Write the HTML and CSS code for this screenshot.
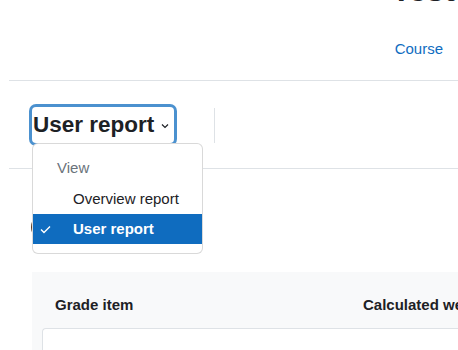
FILE: index.html
```html
<!DOCTYPE html>
<html lang="en">
<head>
  <meta charset="UTF-8" />
  <meta name="viewport" content="width=device-width, initial-scale=1.0"/>
  <title>User report</title>
  <link rel="stylesheet" href="styles.css">
</head>
<body>
<div id="page">
  <header class="page-header">
    <h1 class="page-title">Test</h1>
    <nav class="secondary-nav">
      <a href="#" class="nav-link">Course</a>
    </nav>
  </header>

  <div class="tertiary-nav">
    <div class="report-select">
      <button class="report-btn" aria-expanded="true">
        <span>User report</span>
        <svg class="chevron" width="8" height="6" viewBox="0 0 8 6">
          <polyline points="1,1.5 4,4.5 7,1.5" fill="none" stroke="#1d2125" stroke-width="1.2"/>
        </svg>
      </button>
      <div class="dropdown-menu" role="menu">
        <div class="dropdown-header">View</div>
        <a href="#" class="dropdown-item">Overview report</a>
        <a href="#" class="dropdown-item active">
          <svg class="check" width="11" height="9" viewBox="0 0 11 9">
            <polyline points="1,4.5 4,7.5 10,1.5" fill="none" stroke="#fff" stroke-width="1.4"/>
          </svg>
          User report
        </a>
      </div>
    </div>
    <div class="divider"></div>
  </div>

  <div class="user-heading">
    <span class="avatar"></span>
  </div>

  <div class="report-panel">
    <div class="report-head">
      <span>Grade item</span>
      <span>Calculated weight</span>
    </div>
    <div class="report-body"></div>
  </div>
</div>
</body>
</html>
```

FILE: styles.css
```css
:root {
  --text: #1d2125;
  --muted: #6a737b;
  --blue: #0f6cbf;
  --border: #dee2e6;
  --light: #f8f9fa;
}

body {
  margin: 0;
  font-family: 'Liberation Sans', Arial, sans-serif;
  font-size: 15px;
  line-height: 1.5;
  color: var(--text);
  background: #fff;
  overflow: hidden;
}

#page {
  padding-left: 9px;
}

.page-header {
  height: 80px;
  display: flex;
  flex-direction: column;
  align-items: flex-end;
  border-bottom: 1px solid var(--border);
}

.page-title {
  margin: -29px 3px 0 0;
  font-size: 32px;
  line-height: 38px;
  font-weight: bold;
}

.secondary-nav {
  margin-top: 29px;
  padding-right: 15px;
}

.nav-link {
  color: var(--blue);
  text-decoration: none;
}

.tertiary-nav {
  display: flex;
  align-items: center;
  padding: 26px 0 25px 23px;
  border-bottom: 1px solid var(--border);
}

.report-select {
  position: relative;
}

.report-btn {
  display: flex;
  align-items: center;
  height: 36px;
  width: 142px;
  padding: 0 3px 0 1px;
  border: none;
  border-radius: 4px;
  background: #fff;
  font-family: inherit;
  font-size: 22.5px;
  font-weight: bold;
  color: var(--text);
  box-shadow: 0 0 0 3px rgba(15, 108, 191, 0.75);
}

.report-btn span {
  flex-grow: 1;
  text-align: left;
}

.chevron {
  margin-right: 2px;
  margin-top: 2px;
}

.divider {
  width: 1px;
  height: 35px;
  margin-left: 40px;
  background: var(--border);
}

.dropdown-menu {
  position: absolute;
  top: 36px;
  left: 0;
  width: 169px;
  padding: 10px 0 9px;
  background: #fff;
  border: 1px solid rgba(0, 0, 0, 0.15);
  border-radius: 6px;
  z-index: 10;
}

.dropdown-header {
  height: 30px;
  line-height: 27px;
  padding-left: 24px;
  color: var(--muted);
}

.dropdown-item {
  position: relative;
  display: block;
  height: 30px;
  line-height: 30px;
  padding-left: 40px;
  color: var(--text);
  text-decoration: none;
}

.dropdown-item.active {
  background: var(--blue);
  color: #fff;
  font-weight: bold;
}

.check {
  position: absolute;
  left: 7px;
  top: 11px;
}

.user-heading {
  display: flex;
  align-items: center;
  height: 40px;
  margin-top: 38px;
  padding-left: 22px;
}

.avatar {
  width: 30px;
  height: 30px;
  border-radius: 50%;
  background: #5a3a22;
}

.report-panel {
  margin: 25px 0 0 23px;
  padding: 22px 0 0 10px;
  background: var(--light);
}

.report-head {
  display: grid;
  grid-template-columns: 308px 1fr;
  padding-left: 13px;
  font-weight: bold;
  white-space: nowrap;
  margin-bottom: 11px;
}

.report-body {
  height: 40px;
  background: #fff;
  border: 1px solid var(--border);
  border-right: none;
  border-radius: 4px 0 0 0;
}
```
